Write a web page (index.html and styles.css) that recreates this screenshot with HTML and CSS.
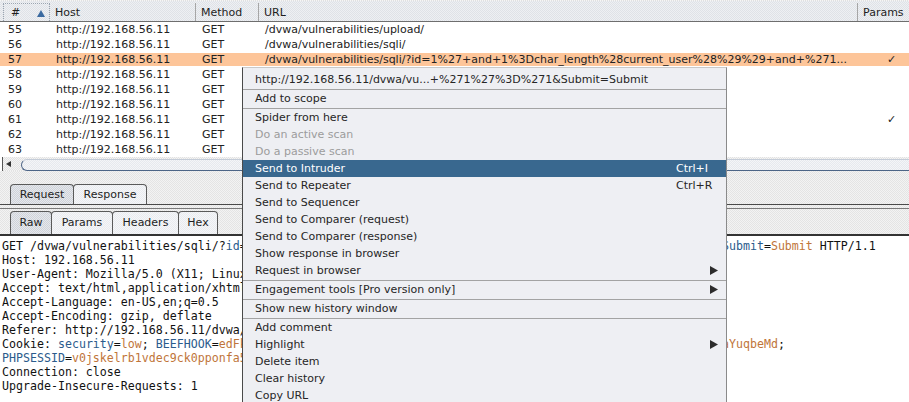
FILE: index.html
```html
<!DOCTYPE html>
<html>
<head>
<meta charset="utf-8">
<link rel="stylesheet" href="styles.css">
</head>
<body>
<div class="app">
  <div class="top-strip"></div>
  <div class="thead">
    <div class="th th-num"><span>#</span><span class="sort"></span></div>
    <div class="th">Host</div>
    <div class="th">Method</div>
    <div class="th">URL</div>
    <div class="th th-last">Params</div>
  </div>
  <div class="rows">
    <div class="row"><span class="c-num">55</span><span>http://192.168.56.11</span><span>GET</span><span>/dvwa/vulnerabilities/upload/</span><span class="c-chk"></span></div>
    <div class="row"><span class="c-num">56</span><span>http://192.168.56.11</span><span>GET</span><span>/dvwa/vulnerabilities/sqli/</span><span class="c-chk"></span></div>
    <div class="row sel"><span class="c-num">57</span><span>http://192.168.56.11</span><span>GET</span><span>/dvwa/vulnerabilities/sqli/?id=1%27+and+1%3Dchar_length%28current_user%28%29%29+and+%271...</span><span class="c-chk">✓</span></div>
    <div class="row"><span class="c-num">58</span><span>http://192.168.56.11</span><span>GET</span><span>/dvwa/vulnerabilities/sqli/</span><span class="c-chk"></span></div>
    <div class="row"><span class="c-num">59</span><span>http://192.168.56.11</span><span>GET</span><span>/dvwa/dvwa/css/main.css</span><span class="c-chk"></span></div>
    <div class="row"><span class="c-num">60</span><span>http://192.168.56.11</span><span>GET</span><span>/dvwa/dvwa/js/dvwaPage.js</span><span class="c-chk"></span></div>
    <div class="row"><span class="c-num">61</span><span>http://192.168.56.11</span><span>GET</span><span>/dvwa/vulnerabilities/sqli/?id=1&amp;Submit=Submit</span><span class="c-chk">✓</span></div>
    <div class="row"><span class="c-num">62</span><span>http://192.168.56.11</span><span>GET</span><span>/dvwa/dvwa/images/logo.png</span><span class="c-chk"></span></div>
    <div class="row"><span class="c-num">63</span><span>http://192.168.56.11</span><span>GET</span><span>/favicon.ico</span><span class="c-chk"></span></div>
  </div>
  <div class="hscroll">
    <span class="larrow"></span>
    <div class="thumb"></div>
  </div>
  <div class="gap"></div>
  <div class="tabs outer">
    <div class="tab on t-req">Request</div>
    <div class="tab t-resp">Response</div>
  </div>
  <div class="midgap"></div>
  <div class="panel">
    <div class="tabs inner">
      <div class="tab on t-raw">Raw</div>
      <div class="tab t-params">Params</div>
      <div class="tab t-headers">Headers</div>
      <div class="tab t-hex">Hex</div>
    </div>
    <pre class="req">GET /dvwa/vulnerabilities/sqli/?<span class="pn">id</span>=<span class="pv">1%27+and+1%3Dchar_length%28current_user%28%29%29+and+%271%27%3D%271</span>&amp;<span class="pn">Submit</span>=<span class="pv">Submit</span> HTTP/1.1
Host: 192.168.56.11
User-Agent: Mozilla/5.0 (X11; Linux x86_64; rv:52.0) Gecko/20100101 Firefox/52.0
Accept: text/html,application/xhtml+xml,application/xml;q=0.9,*/*;q=0.8
Accept-Language: en-US,en;q=0.5
Accept-Encoding: gzip, deflate
Referer: http://192.168.56.11/dvwa/vulnerabilities/sqli/
Cookie: <span class="pn">security</span>=<span class="pv">low</span>; <span class="pn">BEEFHOOK</span>=<span class="pv">edFk2Lq9ZtR4mWx7Hb1NcV8pJs3GyU6oE0iKd5TfQa2Xr9MlB4nC7vZw1PhS8gY3eDjO6uT2aYuqbeMd</span>;
<span class="pn">PHPSESSID</span>=<span class="pv">v0jskelrb1vdec9ck0pponfa54</span>
Connection: close
Upgrade-Insecure-Requests: 1</pre>
  </div>

  <div class="menu">
    <div class="mi">http://192.168.56.11/dvwa/vu...+%271%27%3D%271&amp;Submit=Submit</div>
    <div class="sep"></div>
    <div class="mi">Add to scope</div>
    <div class="sep"></div>
    <div class="mi">Spider from here</div>
    <div class="mi dis">Do an active scan</div>
    <div class="mi dis">Do a passive scan</div>
    <div class="mi hl">Send to Intruder<span class="kbd">Ctrl+I</span></div>
    <div class="mi">Send to Repeater<span class="kbd">Ctrl+R</span></div>
    <div class="mi">Send to Sequencer</div>
    <div class="mi">Send to Comparer (request)</div>
    <div class="mi">Send to Comparer (response)</div>
    <div class="mi">Show response in browser</div>
    <div class="mi">Request in browser<svg class="subarrow" width="8" height="9" viewBox="0 0 8 9"><polygon points="0,0 8,4.5 0,9" /></svg></div>
    <div class="sep"></div>
    <div class="mi">Engagement tools [Pro version only]<svg class="subarrow" width="8" height="9" viewBox="0 0 8 9"><polygon points="0,0 8,4.5 0,9" /></svg></div>
    <div class="sep"></div>
    <div class="mi">Show new history window</div>
    <div class="sep"></div>
    <div class="mi">Add comment</div>
    <div class="mi">Highlight<svg class="subarrow" width="8" height="9" viewBox="0 0 8 9"><polygon points="0,0 8,4.5 0,9" /></svg></div>
    <div class="mi">Delete item</div>
    <div class="mi">Clear history</div>
    <div class="mi">Copy URL</div>
  </div>
</div>
</body>
</html>
```

FILE: styles.css
```css
* { box-sizing: border-box; margin: 0; padding: 0; }
html, body { width: 909px; height: 402px; overflow: hidden; }
body {
  font-family: "DejaVu Sans", "Liberation Sans", sans-serif;
  font-size: 11px;
  color: #222;
  background: #fff;
}
.app {
  position: relative;
  width: 909px;
  height: 402px;
  display: flex;
  flex-direction: column;
  overflow: hidden;
}
.top-strip {
  height: 1px;
  background: repeating-conic-gradient(#e0e0e0 0 25%, #f6f6f6 0 50%) 0 0 / 2px 2px;
}
.thead {
  display: grid;
  grid-template-columns: 50px 146px 63px 599px 51px;
  height: 21px;
  background: repeating-conic-gradient(#dfe2e7 0 25%, #eef0f3 0 50%) 0 0 / 2px 2px;
  border-bottom: 1px solid #6e6e6e;
}
.th {
  padding-left: 5px;
  border-right: 1px solid #a6a6a6;
  margin-top: 2px;
  padding-top: 1px;
  line-height: 17px;
  white-space: nowrap;
  color: #1e1e1e;
}
.th-num {
  padding-left: 7px;
  margin: 2px 0 0 3px;
  border: 1px dotted #9aa4b0;
  border-bottom: none;
  display: flex;
  align-items: center;
  justify-content: space-between;
  padding-right: 4px;
  line-height: 16px;
}
.th-last { border-right: none; }
.sort {
  width: 0; height: 0;
  border-left: 4px solid transparent;
  border-right: 4px solid transparent;
  border-bottom: 7px solid #3b6aa0;
}
.rows { background: #fff; }
.row {
  display: grid;
  grid-template-columns: 50px 146px 63px 599px 51px;
  height: 15px;
  line-height: 15px;
  white-space: nowrap;
}
.row > span { padding-left: 6px; overflow: hidden; }
.row > .c-num { padding-left: 8px; }
.row > .c-chk { padding-left: 29px; }
.row.sel {
  background: linear-gradient(#fdc599, #fdc599) 0 1px / 100% 13px no-repeat;
}
.hscroll {
  height: 14px;
  display: flex;
  align-items: stretch;
  background: repeating-conic-gradient(#e2e2e2 0 25%, #f4f4f4 0 50%) 0 0 / 2px 2px;
  border-left: 1px solid #555;
  margin-left: 2px;
}
.larrow {
  align-self: center;
  width: 0; height: 0;
  margin-left: 3px;
  border-top: 3px solid transparent;
  border-bottom: 3px solid transparent;
  border-right: 5px solid #333;
}
.thumb {
  flex: 1;
  margin-left: 10px;
  margin-top: 2px;
  border-left: 1px solid #4d6587;
  border-bottom: 1px solid #4d6587;
  border-top: 1px solid #c4ccd8;
  border-radius: 6px 0 0 6px;
  background: repeating-conic-gradient(#e6e9ee 0 25%, #f4f5f7 0 50%) 0 0 / 2px 2px;
}
.gap {
  height: 12px;
  background: repeating-conic-gradient(#e4e4e4 0 25%, #f3f3f3 0 50%) 0 0 / 2px 2px;
}
.tabs {
  display: flex;
  padding-left: 10px;
  background: repeating-conic-gradient(#e4e4e4 0 25%, #f3f3f3 0 50%) 0 0 / 2px 2px;
}
.tabs.outer { height: 22px; border-bottom: 1px solid #4a4a4a; padding-top: 1px; }
.tab {
  border: 1px solid #5a5a5a;
  border-bottom: none;
  border-radius: 4px 4px 0 0;
  text-align: center;
  line-height: 19px;
  background: repeating-conic-gradient(#e9ebef 0 25%, #f5f6f8 0 50%) 0 0 / 2px 2px;
  color: #1e1e1e;
}
.tab.on {
  background: repeating-conic-gradient(#cfd3da 0 25%, #e6e8ec 0 50%) 0 0 / 2px 2px;
}
.tab + .tab { margin-left: -1px; }
.t-req { width: 64px; }
.t-resp { width: 74px; }
.midgap {
  height: 3px;
  background: repeating-conic-gradient(#e4e4e4 0 25%, #f3f3f3 0 50%) 0 0 / 2px 2px;
}
.panel {
  flex: 1;
  display: flex;
  flex-direction: column;
  border-top: 1px solid #7a7a7a;
}
.tabs.inner {
  height: 27px;
  padding-top: 2px;
  border-bottom: 2px solid #333;
}
.tabs.inner .tab { line-height: 21px; }
.t-raw { width: 42px; }
.t-params { width: 62px; }
.t-headers { width: 67px; }
.t-hex { width: 40px; }
.req {
  flex: 1;
  background: #fff;
  font-family: "DejaVu Sans Mono", "Liberation Mono", monospace;
  font-size: 11.62px;
  line-height: 14px;
  padding: 3px 0 0 2px;
  color: #111;
  white-space: pre;
}
.pn { color: #2b5b8c; }
.pv { color: #c0753a; }

.menu {
  position: absolute;
  left: 242px;
  top: 67px;
  width: 485px;
  height: 345px;
  background: #eeeff3;
  border: 1px solid #8a8a8a;
  border-top-color: #c9c9c9;
  border-left-color: #4a4a4a;
  padding-top: 3px;
}
.mi {
  position: relative;
  height: 17px;
  line-height: 17px;
  padding-left: 12px;
  color: #262626;
  white-space: nowrap;
}
.mi.dis { color: #9c9c9c; }
.mi.hl { background: #39688f; color: #fff; }
.kbd {
  position: absolute;
  left: 433px;
  top: 0;
}
.subarrow {
  position: absolute;
  left: 467px;
  top: 4px;
  fill: #2c2c2c;
}
.sep {
  height: 2px;
  border-bottom: 1px solid #a3a3a3;
}
```
